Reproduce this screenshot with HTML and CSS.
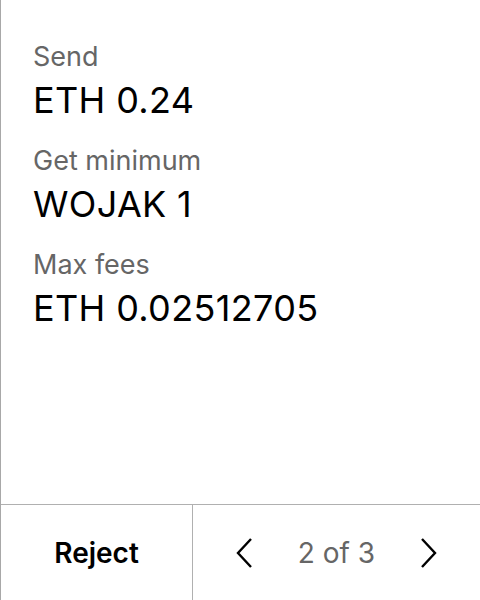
FILE: index.html
```html
<!DOCTYPE html>
<html>
<head>
<meta charset="utf-8">
<link rel="stylesheet" href="styles.css">
</head>
<body>
<div class="panel">
  <div class="content">
    <div class="field">
      <div class="label">Send</div>
      <div class="value">ETH 0.24</div>
    </div>
    <div class="field">
      <div class="label">Get minimum</div>
      <div class="value">WOJAK 1</div>
    </div>
    <div class="field">
      <div class="label">Max fees</div>
      <div class="value">ETH 0.02512705</div>
    </div>
  </div>
  <div class="footer">
    <div class="reject">Reject</div>
    <div class="pager">
      <svg class="chev" width="18" height="32" viewBox="0 0 18 32"><path d="M16 2 L3 16 L16 30" fill="none" stroke="#000" stroke-width="2.4"/></svg>
      <span class="count">2 of 3</span>
      <svg class="chev" width="18" height="32" viewBox="0 0 18 32"><path d="M2 2 L15 16 L2 30" fill="none" stroke="#000" stroke-width="2.4"/></svg>
    </div>
  </div>
</div>
</body>
</html>
```
FILE: styles.css
```css
html, body {
  margin: 0;
  padding: 0;
  background: #fff;
}
body {
  font-family: Inter, "Liberation Sans", sans-serif;
}
.panel {
  width: 480px;
  height: 600px;
  box-sizing: border-box;
  border-left: 1px solid #a8a8a8;
  display: flex;
  flex-direction: column;
}
.content {
  flex: 1;
  padding: 39px 0 0 32px;
  display: flex;
  flex-direction: column;
  gap: 20px;
}
.label {
  font-size: 27px;
  line-height: 36px;
  color: #666;
}
.value {
  font-size: 36px;
  line-height: 46px;
  letter-spacing: 0.35px;
  color: #000;
  margin-top: 2px;
}
.footer {
  height: 95px;
  flex: none;
  border-top: 1px solid #b0b0b0;
  display: flex;
}
.reject {
  width: 191px;
  border-right: 1px solid #b0b0b0;
  display: flex;
  align-items: center;
  justify-content: center;
  font-size: 28px;
  font-weight: 600;
  color: #000;
}
.pager {
  flex: 1;
  display: flex;
  align-items: center;
  justify-content: space-between;
  padding: 0 42px 0 42px;
}
.count {
  font-size: 28px;
  color: #666;
}
```
